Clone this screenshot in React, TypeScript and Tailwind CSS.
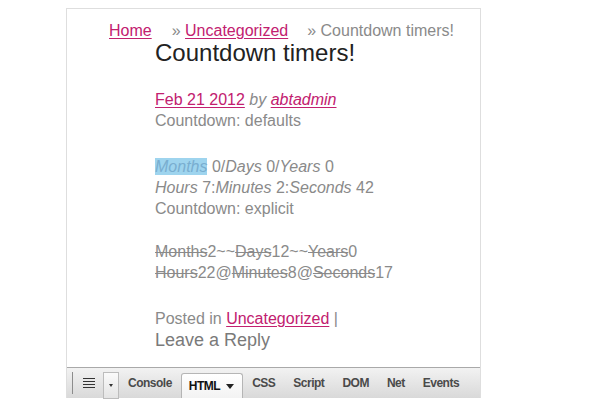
const link = 'text-[#c2206f] underline underline-offset-[2px]';

function Strike({ children }: { children: React.ReactNode }) {
  return <span className="line-through">{children}</span>;
}

function Tab({ label, active }: { label: string; active?: boolean }) {
  if (active) {
    return (
      <div className="mt-[5px] flex h-[25px] items-center self-start rounded-t-[3px] border border-b-0 border-[#b5b5b5] bg-gradient-to-b from-white to-[#f3f3f3] pl-[7px] pr-[8px] text-[#111]">
        {label}
        <svg width="8" height="5" viewBox="0 0 8 5" className="ml-[6px]">
          <path d="M0 0h8L4 5z" fill="#222" />
        </svg>
      </div>
    );
  }
  return <div className="px-[9px] text-[#4a4a4a]">{label}</div>;
}

export default function App() {
  return (
    <div className="h-[400px] w-[600px] bg-white font-['Liberation_Sans',Arial,sans-serif]">
      <div className="ml-[66px] flex h-[390px] w-[415px] translate-y-[8px] flex-col border border-b-0 border-[#dedede]">
        <div className="flex-1 pl-[42px] pt-[11px] text-[16px] leading-[21px] text-[#8a8a8a]">
          <div className="flex">
            <a className={link}>Home</a>
            <span className="ml-[20px]">
              » <a className={link}>Uncategorized</a>
            </span>
            <span className="ml-[19px]">» Countdown timers!</span>
          </div>

          <div className="pl-[46px]">
            <h1 className="text-[24px] leading-[24px] text-[#222]">Countdown timers!</h1>

            <div className="mt-[24px]">
              <a className={link}>Feb 21 2012</a> <i>by</i> <a className={`${link} italic`}>abtadmin</a>
            </div>
            <div>Countdown: defaults</div>

            <div className="mt-[25px]">
              <i className="bg-[#9ed4ee] text-[#79aed0]">Months</i> 0/<i>Days</i> 0/<i>Years</i> 0
            </div>
            <div>
              <i>Hours</i> 7:<i>Minutes</i> 2:<i>Seconds</i> 42
            </div>
            <div>Countdown: explicit</div>

            <div className="mt-[22px]">
              <Strike>Months</Strike>2~~<Strike>Days</Strike>12~~<Strike>Years</Strike>0
            </div>
            <div>
              <Strike>Hours</Strike>22@<Strike>Minutes</Strike>8@<Strike>Seconds</Strike>17
            </div>

            <div className="mt-[25px]">
              Posted in <a className={link}>Uncategorized</a> |
            </div>
            <div className="text-[18px] leading-[22px] text-[#7a7a7a]">Leave a Reply</div>
          </div>
        </div>

        <div className="flex h-[31px] items-center border-t border-[#a9a9a9] bg-gradient-to-b from-[#f2f2f2] to-[#d9d9d9] text-[12px] font-bold tracking-[-0.5px]">
          <div className="ml-[5px] h-[22px] w-px bg-[#8c8c8c]" />
          <div className="ml-[10px] flex w-[12px] flex-col gap-[2px]">
            <div className="h-px bg-[#333]" />
            <div className="h-px bg-[#333]" />
            <div className="h-px bg-[#333]" />
            <div className="h-px bg-[#333]" />
          </div>
          <div className="ml-[8px] mt-[4px] flex h-[27px] w-[16px] items-center justify-center self-start border border-[#bcbcbc] bg-gradient-to-b from-[#fafafa] to-[#e4e4e4]">
            <svg width="4" height="3" viewBox="0 0 4 3">
              <path d="M0 0h4L2 3z" fill="#333" />
            </svg>
          </div>
          <Tab label="Console" />
          <Tab label="HTML" active />
          <Tab label="CSS" />
          <Tab label="Script" />
          <Tab label="DOM" />
          <Tab label="Net" />
          <Tab label="Events" />
        </div>
      </div>
    </div>
  );
}
